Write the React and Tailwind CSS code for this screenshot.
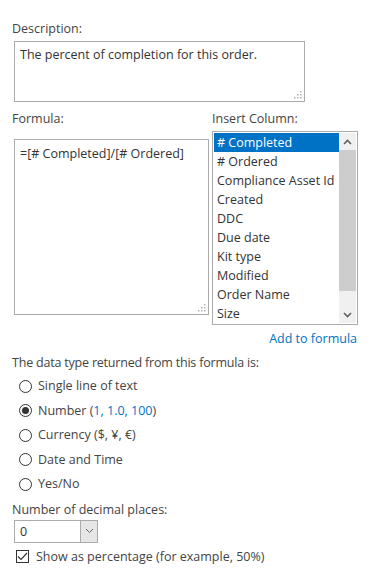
import React from 'react';

const columns = ['# Completed', '# Ordered', 'Compliance Asset Id', 'Created', 'DDC', 'Due date', 'Kit type', 'Modified', 'Order Name', 'Size'];

const types = ['Single line of text', 'Number', 'Currency ($, ¥, €)', 'Date and Time', 'Yes/No'];

const Grip = () => (
    <svg className="absolute right-[2px] bottom-[2px]" width="8" height="8" viewBox="0 0 8 8">
        <rect x="6" y="0" width="1.5" height="1.5" fill="#b5b5b5" />
        <rect x="3" y="3" width="1.5" height="1.5" fill="#b5b5b5" />
        <rect x="6" y="3" width="1.5" height="1.5" fill="#b5b5b5" />
        <rect x="0" y="6" width="1.5" height="1.5" fill="#b5b5b5" />
        <rect x="3" y="6" width="1.5" height="1.5" fill="#b5b5b5" />
        <rect x="6" y="6" width="1.5" height="1.5" fill="#b5b5b5" />
    </svg>
);

const Radio = ({ checked }) => (
    <span className="w-[13px] h-[13px] rounded-full border border-[#333] flex items-center justify-center shrink-0">
        {checked && <span className="w-[7px] h-[7px] rounded-full bg-[#333]" />}
    </span>
);

const App = () => {
    return (
        <div className="w-[369px] h-[582px] bg-white pl-3 pt-[20px] text-[12.5px] text-[#444] leading-[18px]" style={{ fontFamily: '"Open Sans", sans-serif' }}>
            <div>Description:</div>
            <div className="relative ml-[2px] mt-[3px] w-[291px] h-[61px] border border-[#ababab] px-[5px] pt-[4px] text-[#333]">
                The percent of completion for this order.
                <Grip />
            </div>

            {/* formula + insert column */}
            <div className="flex mt-[8px]">
                <div className="w-[200px]">
                    <div>Formula:</div>
                    <div className="relative ml-[2px] mt-[11px] w-[195px] h-[176px] border border-[#ababab] px-[5px] pt-[5px] text-[#333]">
                        =[# Completed]/[# Ordered]
                        <Grip />
                    </div>
                </div>
                <div>
                    <div>Insert Column:</div>
                    <div className="mt-[3px] w-[146px] h-[194px] border border-[#ababab] flex p-px">
                        <div className="flex-1 flex flex-col text-[#333]">
                            {columns.map((c, i) => (
                                <div key={c} className={'h-[19px] leading-[19px] pl-[3px] whitespace-nowrap overflow-hidden ' + (i === 0 ? 'bg-[#0072c6] text-white' : '')}>{c}</div>
                            ))}
                        </div>
                        <div className="w-[17px] flex flex-col bg-[#f0f0f0]">
                            <div className="h-[17px] flex items-center justify-center">
                                <svg width="9" height="6" viewBox="0 0 9 6"><path d="M1 5 L4.5 1.5 L8 5" stroke="#606060" strokeWidth="1.6" fill="none" /></svg>
                            </div>
                            <div className="h-[141px] bg-[#cdcdcd]" />
                            <div className="flex-1" />
                            <div className="h-[17px] flex items-center justify-center">
                                <svg width="9" height="6" viewBox="0 0 9 6"><path d="M1 1 L4.5 4.5 L8 1" stroke="#606060" strokeWidth="1.6" fill="none" /></svg>
                            </div>
                        </div>
                    </div>
                </div>
            </div>

            <div className="flex justify-end pr-[12px] mt-[5px]">
                <span className="text-[#0072c6]">Add to formula</span>
            </div>

            <div className="mt-[6px] tracking-[-0.2px]">The data type returned from this formula is:</div>
            <div className="flex flex-col mt-[2px]">
                {types.map((t, i) => (
                    <div key={t} className="flex items-center gap-[6px] pl-[7px] h-[24.5px]">
                        <Radio checked={i === 1} />
                        {i === 1 ? (
                            <span>Number (<span className="text-[#0072c6]">1, 1.0, 100</span>)</span>
                        ) : (
                            <span>{t}</span>
                        )}
                    </div>
                ))}
            </div>

            <div className="mt-[4px]">Number of decimal places:</div>
            <div className="ml-[2px] mt-[1px] w-[84px] h-[23px] border border-[#ababab] flex">
                <div className="flex-1 pl-[5px] leading-[21px] text-[#333]">0</div>
                <div className="w-[17px] bg-[#e6e6e6] border-l border-[#ababab] flex items-center justify-center">
                    <svg width="9" height="6" viewBox="0 0 9 6"><path d="M1 1 L4.5 4.5 L8 1" stroke="#666" strokeWidth="1" fill="none" /></svg>
                </div>
            </div>

            <div className="flex items-center gap-[7px] pl-[4px] mt-[5px]">
                <span className="w-[13px] h-[13px] border border-[#333] flex items-center justify-center">
                    <svg width="11" height="9" viewBox="0 0 11 9"><path d="M1 4.5 L4 7.5 L10 1" stroke="#333" strokeWidth="1.2" fill="none" /></svg>
                </span>
                <span>Show as percentage (for example, 50%)</span>
            </div>
        </div>
    );
};

export default App;
